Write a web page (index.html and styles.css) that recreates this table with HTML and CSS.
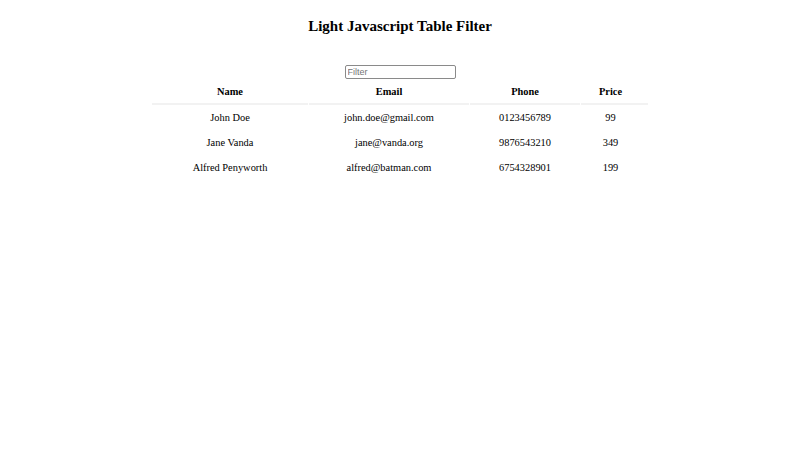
FILE: index.html
```html
<!DOCTYPE html>
<html>
<head>
<meta charset="utf-8">
<link rel="stylesheet" href="styles.css">
</head>
<body>
<h3 class="title">Light Javascript Table Filter</h3>
<div class="filter-row"><input class="filter" type="text" placeholder="Filter"></div>
<table class="data">
<thead>
<tr><th class="c-name">Name</th><th class="c-email">Email</th><th class="c-phone">Phone</th><th class="c-price">Price</th></tr>
</thead>
<tbody>
<tr><td>John Doe</td><td>john.doe@gmail.com</td><td>0123456789</td><td>99</td></tr>
<tr><td>Jane Vanda</td><td>jane@vanda.org</td><td>9876543210</td><td>349</td></tr>
<tr><td>Alfred Penyworth</td><td>alfred@batman.com</td><td>6754328901</td><td>199</td></tr>
</tbody>
</table>
</body>
</html>
```
FILE: styles.css
```css
body {
  margin: 8px;
  font-family: "Liberation Serif", "Times New Roman", serif;
  color: #000;
  background: #fff;
}
.title {
  text-align: center;
  font-size: 15px;
  line-height: 18px;
  margin: 9px 0 30px;
}
.filter-row {
  text-align: center;
  line-height: 0;
}
.filter {
  box-sizing: border-box;
  width: 111px;
  height: 14px;
  font-size: 9px;
  font-family: "Liberation Sans", Arial, sans-serif;
  padding: 0 2px;
  border: 1px solid #8a8a8a;
  border-radius: 2px;
  margin: 0;
  vertical-align: top;
}
.data {
  margin: 0 auto;
  font-size: 10.4px;
  line-height: 12px;
  border-spacing: 1px;
  table-layout: fixed;
}
.c-name { width: 156px; }
.c-email { width: 160px; }
.c-phone { width: 110px; }
.c-price { width: 59px; }
.data th {
  padding: 6px 0 5px;
  border-bottom: 2px solid #f2f2f2;
}
.data td {
  text-align: center;
  padding: 6px 0;
}
.data th:last-child,
.data td:last-child {
  padding-right: 8px;
}
```
